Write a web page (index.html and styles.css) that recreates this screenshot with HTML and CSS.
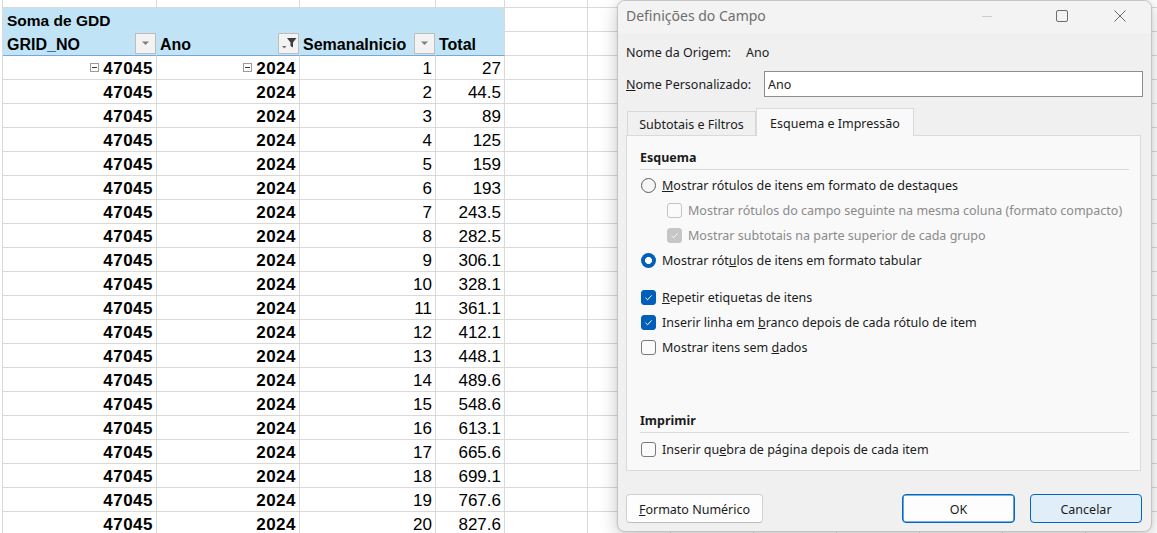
FILE: index.html
```html
<!DOCTYPE html>
<html lang="pt">
<head>
<meta charset="utf-8">
<title>Definições do Campo</title>
<link rel="stylesheet" href="styles.css">
</head>
<body>
<div class="screen">
  <div class="sheet">
    <div class="row row-top"><div class="c ca"></div><div class="c cb"></div><div class="c cc"></div><div class="c cd"></div><div class="rest"></div></div>
    <div class="row"><div class="c hmerge">Soma de GDD</div><div class="rest"></div></div>
    <div class="row">
      <div class="c ca h2"><span>GRID_NO</span><span class="dd"><svg width="9" height="5" viewBox="0 0 9 5"><path d="M1 0.5H8L4.5 4Z" fill="#7f7f7f"/></svg></span></div>
      <div class="c cb h2"><span>Ano</span><span class="dd"><svg width="19" height="19" viewBox="0 0 19 19"><path d="M8 4H17.5L14 8.5V13.5L11.5 12V8.5Z" fill="#3e3e3e"/><path d="M3 12H7.5L5.25 14.5Z" fill="#707070"/></svg></span></div>
      <div class="c cc h2"><span>SemanaInicio</span><span class="dd"><svg width="9" height="5" viewBox="0 0 9 5"><path d="M1 0.5H8L4.5 4Z" fill="#7f7f7f"/></svg></span></div>
      <div class="c cd h2 hlast"><span>Total</span></div>
      <div class="rest"></div>
    </div>
    <div class="row"><div class="c ca b"><span class="exp"></span>47045</div><div class="c cb b"><span class="exp"></span>2024</div><div class="c cc">1</div><div class="c cd">27</div><div class="rest"></div></div>
    <div class="row"><div class="c ca b">47045</div><div class="c cb b">2024</div><div class="c cc">2</div><div class="c cd">44.5</div><div class="rest"></div></div>
    <div class="row"><div class="c ca b">47045</div><div class="c cb b">2024</div><div class="c cc">3</div><div class="c cd">89</div><div class="rest"></div></div>
    <div class="row"><div class="c ca b">47045</div><div class="c cb b">2024</div><div class="c cc">4</div><div class="c cd">125</div><div class="rest"></div></div>
    <div class="row"><div class="c ca b">47045</div><div class="c cb b">2024</div><div class="c cc">5</div><div class="c cd">159</div><div class="rest"></div></div>
    <div class="row"><div class="c ca b">47045</div><div class="c cb b">2024</div><div class="c cc">6</div><div class="c cd">193</div><div class="rest"></div></div>
    <div class="row"><div class="c ca b">47045</div><div class="c cb b">2024</div><div class="c cc">7</div><div class="c cd">243.5</div><div class="rest"></div></div>
    <div class="row"><div class="c ca b">47045</div><div class="c cb b">2024</div><div class="c cc">8</div><div class="c cd">282.5</div><div class="rest"></div></div>
    <div class="row"><div class="c ca b">47045</div><div class="c cb b">2024</div><div class="c cc">9</div><div class="c cd">306.1</div><div class="rest"></div></div>
    <div class="row"><div class="c ca b">47045</div><div class="c cb b">2024</div><div class="c cc">10</div><div class="c cd">328.1</div><div class="rest"></div></div>
    <div class="row"><div class="c ca b">47045</div><div class="c cb b">2024</div><div class="c cc">11</div><div class="c cd">361.1</div><div class="rest"></div></div>
    <div class="row"><div class="c ca b">47045</div><div class="c cb b">2024</div><div class="c cc">12</div><div class="c cd">412.1</div><div class="rest"></div></div>
    <div class="row"><div class="c ca b">47045</div><div class="c cb b">2024</div><div class="c cc">13</div><div class="c cd">448.1</div><div class="rest"></div></div>
    <div class="row"><div class="c ca b">47045</div><div class="c cb b">2024</div><div class="c cc">14</div><div class="c cd">489.6</div><div class="rest"></div></div>
    <div class="row"><div class="c ca b">47045</div><div class="c cb b">2024</div><div class="c cc">15</div><div class="c cd">548.6</div><div class="rest"></div></div>
    <div class="row"><div class="c ca b">47045</div><div class="c cb b">2024</div><div class="c cc">16</div><div class="c cd">613.1</div><div class="rest"></div></div>
    <div class="row"><div class="c ca b">47045</div><div class="c cb b">2024</div><div class="c cc">17</div><div class="c cd">665.6</div><div class="rest"></div></div>
    <div class="row"><div class="c ca b">47045</div><div class="c cb b">2024</div><div class="c cc">18</div><div class="c cd">699.1</div><div class="rest"></div></div>
    <div class="row"><div class="c ca b">47045</div><div class="c cb b">2024</div><div class="c cc">19</div><div class="c cd">767.6</div><div class="rest"></div></div>
    <div class="row"><div class="c ca b">47045</div><div class="c cb b">2024</div><div class="c cc">20</div><div class="c cd">827.6</div><div class="rest"></div></div>
  </div>

  <div class="dlg">
    <div class="tb">
      <div class="tb-title">Definições do Campo</div>
      <div class="ctl ctl-min"><svg width="10" height="1" viewBox="0 0 10 1"><rect width="10" height="1" fill="#cdcdcd"/></svg></div>
      <div class="ctl ctl-max"><svg width="12" height="12" viewBox="0 0 12 12"><rect x="0.5" y="0.5" width="11" height="11" rx="1.5" fill="none" stroke="#6b6b6b"/></svg></div>
      <div class="ctl ctl-close"><svg width="12" height="12" viewBox="0 0 12 12"><path d="M0.5 0.5L11.5 11.5M11.5 0.5L0.5 11.5" fill="none" stroke="#6b6b6b"/></svg></div>
    </div>
    <div class="body">
      <div class="line-origin"><span class="lbl-origin">Nome da Origem:</span><span>Ano</span></div>
      <div class="line-custom"><span class="lbl-custom"><u>N</u>ome Personalizado:</span><div class="input">Ano</div></div>
      <div class="tabs">
        <div class="tab">Subtotais e Filtros</div>
        <div class="tab tab-active">Esquema e Impressão</div>
      </div>
      <div class="panel">
        <div class="sect sect-first">Esquema</div>
        <div class="opts">
          <div class="opt"><span class="radio"></span><span><u>M</u>ostrar rótulos de itens em formato de destaques</span></div>
          <div class="opt opt-sub dis"><span class="cbx cbx-dis"></span><span>Mostrar rótulos do campo seguinte na mesma coluna (formato compacto)</span></div>
          <div class="opt opt-sub dis"><span class="cbx cbx-dis-on"><svg width="13" height="13" viewBox="0 0 13 13"><path d="M3.5 6.8L5.6 8.8L9.6 4.4" fill="none" stroke="#fafafa" stroke-width="1"/></svg></span><span>Mostrar subtotais na parte superior de cada grupo</span></div>
          <div class="opt"><span class="radio radio-on"></span><span>Mostrar rót<u>u</u>los de itens em formato tabular</span></div>
        </div>
        <div class="opts opts-2">
          <div class="opt"><span class="cbx cbx-on"><svg width="13" height="13" viewBox="0 0 13 13"><path d="M3.5 6.8L5.6 8.8L9.6 4.4" fill="none" stroke="#fff" stroke-width="1"/></svg></span><span><u>R</u>epetir etiquetas de itens</span></div>
          <div class="opt"><span class="cbx cbx-on"><svg width="13" height="13" viewBox="0 0 13 13"><path d="M3.5 6.8L5.6 8.8L9.6 4.4" fill="none" stroke="#fff" stroke-width="1"/></svg></span><span>Inserir linha em <u>b</u>ranco depois de cada rótulo de item</span></div>
          <div class="opt"><span class="cbx"></span><span>Mostrar itens sem <u>d</u>ados</span></div>
        </div>
        <div class="sect sect-print">Imprimir</div>
        <div class="opts opts-3">
          <div class="opt"><span class="cbx"></span><span>Inserir qu<u>e</u>bra de página depois de cada item</span></div>
        </div>
      </div>
      <div class="btns">
        <div class="btn btn-fmt"><span><u>F</u>ormato Numérico</span></div>
        <div class="btn btn-ok">OK</div>
        <div class="btn btn-cancel">Cancelar</div>
      </div>
    </div>
  </div>
</div>
</body>
</html>
```

FILE: styles.css
```css
* { box-sizing: border-box; }
html, body { margin: 0; padding: 0; background: #ffffff; }

.screen {
  position: relative;
  width: 1157px;
  height: 533px;
  overflow: hidden;
  font-family: "Liberation Sans", Arial, sans-serif;
  color: #000;
}

/* ---------- spreadsheet ---------- */
.sheet { display: flex; flex-direction: column; padding-left: 2px; }
.row { display: flex; height: 24px; flex: none; border-left: 1px solid #d9d9d9; }
.row-top { height: 8px; }

.c {
  flex: none;
  height: 100%;
  border-right: 1px solid #d9d9d9;
  border-bottom: 1px solid #d9d9d9;
  display: flex;
  align-items: center;
  justify-content: flex-end;
  padding-right: 3px;
  font-size: 17px;
  white-space: nowrap;
  padding-top: 2px;
}
.ca { width: 154px; }
.cb { width: 143px; }
.cc { width: 136px; }
.cd { width: 69px; }
.b { font-weight: bold; letter-spacing: 0.5px; }

.rest {
  flex: 1;
  height: 100%;
  border-bottom: 1px solid #d9d9d9;
  background: repeating-linear-gradient(to right, transparent 0 82px, #d9d9d9 82px 83px);
}

.hmerge {
  width: 502px;
  background: #c0e4f5;
  border-bottom-color: #c0e4f5;
  justify-content: flex-start;
  padding-left: 4px;
  font-weight: bold;
  font-size: 15.5px;
}
.h2 {
  background: #c0e4f5;
  border-bottom-color: #76a9d6;
  border-right-color: #c0e4f5;
  justify-content: space-between;
  padding: 2px 0 0 3px;
  font-weight: bold;
  font-size: 16px;
}
.ca.h2 { padding-left: 4px; }
.h2.hlast { border-right-color: #d9d9d9; }

.dd {
  width: 21px;
  height: 21px;
  border: 1px solid #bdbdbd;
  background: #f3f3f3;
  display: flex;
  align-items: center;
  justify-content: center;
  margin-top: -2px;
}

.exp {
  position: relative;
  width: 9px;
  height: 9px;
  border: 1px solid #9c9c9c;
  background: #fff;
  margin-right: 4px;
  margin-top: -2px;
}
.exp::after {
  content: "";
  position: absolute;
  left: 1px;
  right: 1px;
  top: 3px;
  height: 1px;
  background: #3a3a3a;
}

/* ---------- dialog ---------- */
.dlg {
  position: absolute;
  left: 617px;
  top: 0;
  width: 535px;
  height: 532px;
  background: #f0f0f0;
  border: 1px solid #c4c4c4;
  border-radius: 8px;
  box-shadow: 0 4px 18px rgba(0, 0, 0, 0.22), 0 0 3px rgba(0, 0, 0, 0.08);
  display: flex;
  flex-direction: column;
  overflow: hidden;
  font-family: "Noto Sans", "Open Sans", sans-serif;
  font-size: 12.5px;
  color: #1b1b1b;
}

.tb {
  height: 32px;
  flex: none;
  display: flex;
  align-items: center;
  background: #f3f3f3;
  padding-left: 8px;
}
.tb-title { flex: 1; font-size: 14px; color: #6e6e6e; padding-bottom: 3px; }
.ctl { width: 46px; height: 32px; display: flex; align-items: center; justify-content: center; padding-bottom: 2px; }
.ctl-min { margin-right: 29px; }
.ctl-max { margin-right: 12px; }
.ctl-close { margin-right: 8px; }

.body { padding: 0 8px 0 8px; display: flex; flex-direction: column; }

.line-origin { height: 24px; margin-top: 7px; display: flex; align-items: center; }
.lbl-origin { width: 120px; }

.line-custom { height: 26px; margin-top: 7px; display: flex; align-items: center; }
.lbl-custom { width: 138px; }
.input {
  flex: 1;
  height: 26px;
  background: #fff;
  border: 1px solid #8d8d8d;
  display: flex;
  align-items: center;
  padding-left: 3px;
}

.tabs {
  margin-top: 11px;
  height: 28px;
  display: flex;
  align-items: flex-end;
  position: relative;
  z-index: 1;
}
.tab {
  height: 24px;
  margin-bottom: 1px;
  display: flex;
  align-items: center;
  justify-content: center;
  border: 1px solid #d9d9d9;
  border-bottom: none;
  background: #f0f0f0;
  width: 129px;
  margin-left: 1px;
  padding-top: 1px;
}
.tab-active {
  height: 28px;
  margin-bottom: 0;
  margin-left: 0;
  width: 158px;
  background: #f9f9f9;
  padding-top: 2px;
}

.panel {
  margin-top: -1px;
  margin-right: 2px;
  height: 336px;
  border: 1px solid #dadada;
  background: #f9f9f9;
  padding: 11px 11px 0 13px;
  display: flex;
  flex-direction: column;
}

.sect {
  height: 23px;
  line-height: 20px;
  padding-top: 1px;
  font-weight: bold;
  border-bottom: 1px solid #d9d9d9;
  flex: none;
}
.sect-print { margin-top: 50px; }

.opts { display: flex; flex-direction: column; margin-top: 3px; }
.opts-2 { margin-top: 12px; }
.opts-3 { margin-top: 4px; }

.opt { height: 25px; display: flex; align-items: center; white-space: nowrap; }
.opt > span:last-child { margin-left: 6px; }
.opt-sub { padding-left: 26px; }
.dis { color: #8a8a8a; }

.radio {
  width: 15px;
  height: 15px;
  margin-left: 1px;
  border-radius: 50%;
  border: 1px solid #5e5e5e;
  background: #f6f6f6;
  flex: none;
}
.radio-on {
  border: none;
  background: radial-gradient(circle, #ffffff 0 3.2px, #005fb8 3.8px);
}

.cbx {
  width: 15px;
  height: 15px;
  margin-left: 1px;
  border-radius: 3px;
  border: 1px solid #7a7a7a;
  background: #fbfbfb;
  flex: none;
  display: flex;
  align-items: center;
  justify-content: center;
}
.cbx-on { background: #005fb8; border-color: #005fb8; }
.cbx-dis { border-color: #c3c3c3; }
.cbx-dis-on { background: #c6c6c6; border-color: #c6c6c6; }

.btns {
  margin-top: 23px;
  height: 29px;
  display: flex;
  padding-right: 1px;
}
.btn {
  height: 29px;
  border-radius: 4px;
  display: flex;
  align-items: center;
  justify-content: center;
  background: #fdfdfd;
  border: 1px solid #d0d0d0;
  border-bottom-color: #bdbdbd;
  padding-top: 1px;
}
.btn-fmt { width: 137px; margin-right: auto; }
.btn-ok {
  width: 113px;
  border: 1px solid #0067c0;
  box-shadow: inset 0 0 0 0.6px #0067c0;
  margin-right: 15px;
}
.btn-cancel {
  width: 112px;
  background: #e0eef9;
  border: 1px solid #0067c0;
}
```
